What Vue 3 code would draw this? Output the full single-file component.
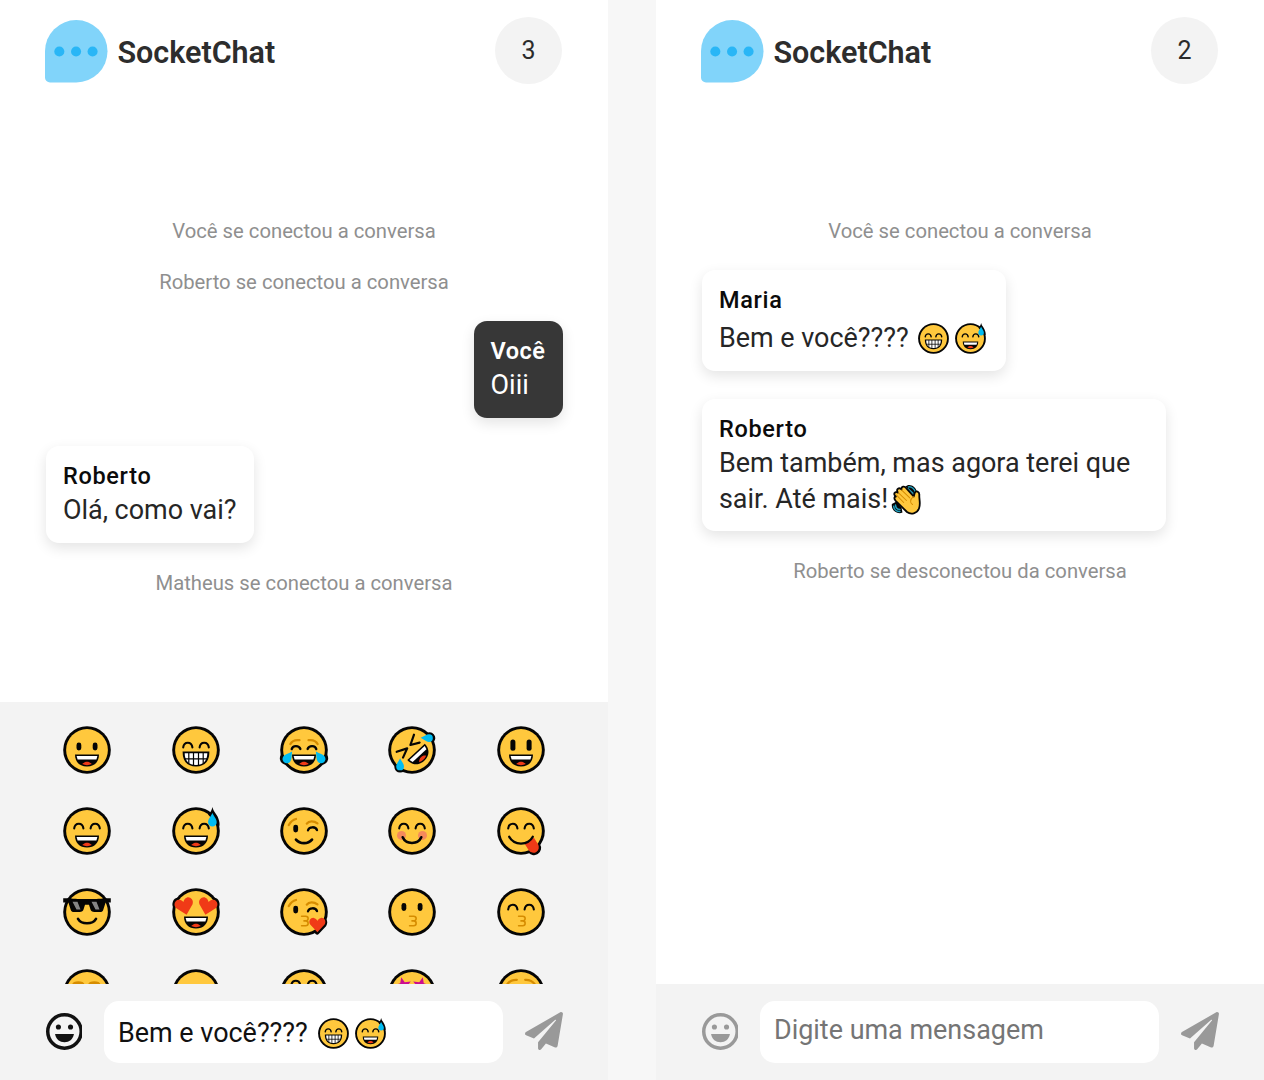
<script setup>
import { h } from 'vue'

const ink = '#050505'
const dot = (x, y, w = 4.8, t = 7.8) =>
  `<rect x="${x - w / 2}" y="${y - t / 2}" width="${w}" height="${t}" rx="${w / 2}" fill="${ink}"/>`
const line = (d, color = ink, w = 2.1) =>
  `<path d="${d}" fill="none" stroke="${color}" stroke-width="${w}" stroke-linecap="round" stroke-linejoin="round"/>`
const fill = (d, color) => `<path d="${d}" fill="${color}"/>`
const put = (x, y, r, body, s = 1) => `<g transform="translate(${x} ${y}) rotate(${r}) scale(${s})">${body}</g>`
const halo = (d) => `<path d="${d}" fill="${ink}" stroke="${ink}" stroke-width="5" stroke-linejoin="round"/>`

const rim = `<circle r="23.8" fill="${ink}"/>`
const skin = '<circle r="20.9" fill="#ffc83d"/>'
const base = rim + skin
const happyEyes = line('M-12.8-2.6C-12-8.8-4.4-8.8-3.6-2.6M3.6-2.6C4.4-8.8 12-8.8 12.8-2.6')
const grin =
  fill('M-12 4.5H12C12 12 7.4 16.5 0 16.5S-12 12-12 4.5Z', ink) +
  fill('M-10.4 6H10.4L9.4 9.6H-9.4Z', '#fff') +
  fill('M-4.8 14.1C-3 12.1-1.5 11.7 0 11.7S3 12.1 4.8 14.1C2 15.5-2 15.5-4.8 14.1Z', '#f03a17')
const kiss = line('M-2.4 4.3H1.6C5 4.3 5 8.9 1.6 8.9H0H1.6C5 8.9 5 13.8 1.6 13.8H-2.4', '#d68c00', 1.6)
const brow = '#d68c00'
const blue = '#00bcf2'
const red = '#f03a17'
const drop = 'M0-6.8C2-2.6 4.3-.6 4.3 2.4A4.3 4.3 0 0 1-4.3 2.4C-4.3-.6-2-2.6 0-6.8Z'
const heart = 'M0 7.8L-7.2 .2C-9.5-3.4-6.5-7-3.6-6.5C-1.6-6.2-.5-4.8 0-3.5C.5-4.8 1.6-6.2 3.6-6.5C6.5-7 9.5-3.4 7.2 .2Z'
const star = 'M0-8L2.2-2.5 8-2 3.6 1.6 5 7 0 4-5 7-3.6 1.6-8-2-2.2-2.5Z'
const tongue = 'M-5-5H5V2A5 5 0 0 1-5 2Z'
const winkEyes =
  dot(-8.3, -2.4) +
  line('M4-.7C5-4.7 11.8-4.7 13-.9', ink, 2.3) +
  line('M-15.2-6C-13.5-9-11.5-11.2-8-12M2.8-7.4C5-10.5 10-10.4 13.4-7.6', brow, 2.3)

const art = {
  grinning: base + dot(-8.1, -3.5) + dot(8.1, -3.5) + grin,
  beaming:
    base + happyEyes +
    fill('M-13.4 1.6H13.4C13.5 11.5 8.5 16.5 0 16.5S-13.5 11.5-13.4 1.6Z', ink) +
    fill('M-11.3 3.2H11.3C11.1 10.6 7.6 14.9 0 14.9S-11.1 10.6-11.3 3.2Z', '#fff') +
    line('M-11 8.9H11M-7.2 3V13M-2.5 3V15M2.5 3V15M7.2 3V13', ink, 1.2),
  joy:
    rim + put(-16.4, 6.4, 35, halo(drop), 0.95) + put(16.4, 6.4, -35, halo(drop), 0.95) + skin +
    line('M-13.6-6C-12-9-8-10.3-4.5-9.8M13.6-6C12-9 8-10.3 4.5-9.8', brow, 2.3) +
    line('M-12.3-.9C-11.3-4.8-5-4.8-3.6-1M3.6-1C5-4.8 11.3-4.8 12.3-.9', ink, 2.3) + grin +
    put(-15.8, 7, 35, fill(drop, blue)) + put(15.8, 7, -35, fill(drop, blue)),
  rofl:
    rim + put(15.5, -12, -88, halo(drop), 0.85) + put(-11.9, 14.8, 0, halo(drop), 0.85) + skin +
    line('M-15.3 1.8L-4.8-1.6-9 7.6M2-15.3L-1.6-5 7.6-7.4', ink, 2.2) +
    put(1, -1.4, -43, grin) +
    put(14.8, -12, -88, fill(drop, blue), 0.9) + put(-11.9, 14.3, 0, fill(drop, blue), 0.9),
  smiley: base + dot(-8.1, -4.8, 5, 11.2) + dot(8.1, -4.8, 5, 11.2) + grin,
  smile: base + happyEyes + grin,
  sweat:
    base + happyEyes + grin +
    fill('M16.4-24C17.4-19 21.8-16.5 23-10.5C23.4-9 23.8-7 23.4-5L20-8 12-16.5C14.5-18.5 15.8-21 16.4-24Z', ink) +
    put(16.4, -11.2, 0, fill(drop, blue)),
  wink: base + winkEyes + line('M-8 8.6C-4 13.4 4 13.4 8 8.6', ink, 2.7),
  blush:
    base + happyEyes +
    '<circle cx="-10.5" cy="4.4" r="4.5" fill="#f5895b"/><circle cx="10.5" cy="4.4" r="4.5" fill="#f5895b"/>' +
    line('M-9.3 6.3C-6 13.8 6 13.8 9.3 6.3', ink, 2.6),
  yum:
    rim + put(12, 15.4, -32, halo(tongue), 0.95) + skin +
    put(11.2, 14.4, -32, fill(tongue, red), 1.1) +
    fill('M-9 4H13L11.5 7.5C8 12 3 12.6 0 12.6Z', '#ffc83d') + happyEyes +
    line('M-11.8 5.8C-7 14.8 7 14.8 11.8 5.8', ink, 2.3),
  sunglasses:
    base +
    fill('M-23.8-13.7H-17C-11-12.8-8-13-3-13H3C8-13 11-12.8 17-13.7H23.8V-9.6H18.6L16.2-2C15.7-.4 14.7 0 13.2 0H7.5C5 0 4-.9 3.4-2.7L2-7.3H-2L-3.4-2.7C-4-.9-5 0-7.5 0H-13.2C-14.7 0-15.7-.4-16.2-2L-18.6-9.6H-23.8Z', ink) +
    fill('M-14.5-10.3H-9.5L-6.5-2.6H-10.5ZM4.5-10.3H9.5L12.5-2.6H8.5Z', '#858585') +
    line('M-9 6.8C-5.5 12.8 5.5 12.8 9 6.8', ink, 2.6),
  hearts:
    rim + put(-12.6, -6.5, -14, halo(heart)) + put(12.6, -6.5, 14, halo(heart)) + skin +
    put(-11.6, -6, -14, fill(heart, red), 1.16) + put(11.6, -6, 14, fill(heart, red), 1.16) + grin,
  kissHeart:
    rim + put(13.2, 12.8, 0, halo(heart), 0.95) + skin +
    winkEyes + kiss + put(13.4, 12.4, 0, fill(heart, red)),
  kissing: base + dot(-8.1, -5) + dot(8.1, -5) + kiss,
  kissSmile: base + happyEyes + kiss,
  relaxed: base + '<ellipse cx="-8.7" cy="-8.8" rx="6" ry="3" fill="#d68c00"/><ellipse cx="7.3" cy="-8.8" rx="6" ry="3" fill="#d68c00"/>',
  slight: base,
  hugging: base + line('M-12.8-7.5C-12-13.8-4.4-13.8-3.6-7.5M3.6-7.5C4.4-13.8 12-13.8 12.8-7.5'),
  stars: base + put(-9, -7.6, -12, fill(star, '#cc0d8f'), 1.05) + put(9, -7.6, 12, fill(star, '#cc0d8f'), 1.05),
  thinking: base + line('M-13.5-9C-11.5-12-8-13.4-4.2-13.2M4.2-13.2C8-13.4 11.5-12 13.5-9', brow, 2.3),
  wave:
    '<g transform="scale(1.55)">' +
    fill('M-1-13C2-16.5 9.5-14 10.5-7L8-4ZM-14.6 4.5C-15.5 11-9 15.5-4 13L-5 8-10 2Z', ink) +
    line('M2-12.6C5.3-13 8.3-10.4 8.7-7.2M1.6-10.6L6.5-6.2M-12.8 6.8C-12.4 10.4-9.5 12.2-6.6 12M-11 5.6C-10.8 8-9 9.9-6.6 10', '#1f9dbb', 1.5) +
    `<path d="M-12-4.5C-13-7-10-8.3-8.5-6.8C-11-10.5-7.2-12.6-5-10C-5.5-13.2-2-13.7-.3-11.4L7.2-3L8.2-6.5C9.5-9.3 13-8 12.8-4.5C12.5 0 14.4 4 12.5 9C10.5 14 4.5 15.5 .5 12.5L-10.8 1.3C-12.8-.8-12.4-3-10.6-3Z" fill="#ffc83d" stroke="${ink}" stroke-width="1.8" stroke-linejoin="round"/>` +
    line('M-10-4.4L-2.8 3M-8-6.6L0 1M-4.8-9.4L3.3-1.6M7-2.8C3.2 0 3.4 3.6 6 5', '#d68c00', 1) + '</g>',
}

const Emoji = (props) =>
  h('svg', { viewBox: '-24 -24 48 48', overflow: 'visible', innerHTML: art[props.name] })
Emoji.props = ['name']

const picker = [
  'grinning', 'beaming', 'joy', 'rofl', 'smiley',
  'smile', 'sweat', 'wink', 'blush', 'yum',
  'sunglasses', 'hearts', 'kissHeart', 'kissing', 'kissSmile',
  'relaxed', 'slight', 'hugging', 'stars', 'thinking',
]

const chats = [
  {
    online: 3,
    open: true,
    draft: { text: 'Bem e você???? ', emojis: ['beaming', 'sweat'] },
    items: [
      { notice: 'Você se conectou a conversa' },
      { notice: 'Roberto se conectou a conversa' },
      { author: 'Você', text: 'Oiii', own: true },
      { author: 'Roberto', text: 'Olá, como vai?' },
      { notice: 'Matheus se conectou a conversa' },
    ],
  },
  {
    online: 2,
    open: false,
    items: [
      { notice: 'Você se conectou a conversa' },
      { author: 'Maria', text: 'Bem e você???? ', emojis: ['beaming', 'sweat'] },
      { author: 'Roberto', text: 'Bem também, mas agora terei que sair. Até mais!', emojis: ['wave'], tight: true },
      { notice: 'Roberto se desconectou da conversa' },
    ],
  },
]
</script>

<template>
  <main class="screens">
    <section v-for="(chat, i) in chats" :key="i" class="chat">
      <header class="header">
        <svg class="logo" viewBox="0 0 62 62">
          <path d="M31 0A31 31 0 0 1 31 62H5A5 5 0 0 1 0 57V31A31 31 0 0 1 31 0Z" fill="#81d4fa" />
          <g fill="#29b6f6">
            <circle cx="14.2" cy="31.3" r="5" />
            <circle cx="30.8" cy="31.3" r="5" />
            <circle cx="47.2" cy="31.3" r="5" />
          </g>
        </svg>
        <h1 class="title">SocketChat</h1>
        <span class="online">{{ chat.online }}</span>
      </header>

      <div class="messages">
        <template v-for="(item, k) in chat.items" :key="k">
          <p v-if="item.notice" class="notice">{{ item.notice }}</p>
          <article v-else class="bubble" :class="{ own: item.own }">
            <strong class="author">{{ item.author }}</strong>
            <p class="text" :class="{ tall: item.emojis && !item.tight }">{{ item.text }}<Emoji v-for="e in item.emojis" :key="e" :name="e" class="inline-emoji" /></p>
          </article>
        </template>
      </div>

      <div v-if="chat.open" class="picker">
        <span v-for="name in picker" :key="name" class="cell"><Emoji :name="name" class="emoji" /></span>
      </div>

      <footer class="composer" :class="{ active: chat.open }">
        <svg class="smile" viewBox="-18 -18 36 36">
          <circle r="16.3" fill="none" stroke="currentColor" stroke-width="3.4" />
          <circle cx="-5.9" cy="-4.4" r="2.5" fill="currentColor" />
          <circle cx="5.9" cy="-4.4" r="2.5" fill="currentColor" />
          <path d="M-9.2 2.4H9.2C8.2 7.7 4.6 10.4 0 10.4S-8.2 7.7-9.2 2.4Z" fill="currentColor" />
        </svg>
        <div class="field">
          <p v-if="chat.draft" class="draft">{{ chat.draft.text }}<Emoji v-for="e in chat.draft.emojis" :key="e" :name="e" class="inline-emoji" /></p>
          <p v-else class="placeholder">Digite uma mensagem</p>
        </div>
        <svg class="send" viewBox="0 0 512 512">
          <path fill="currentColor" d="M476 3.2L12.5 270.6c-18.1 10.4-15.8 35.6 2.2 43.2L121 358.4l287.3-253.2c5.5-4.9 13.3 2.6 8.6 8.3L176 407v80.5c0 23.6 28.5 32.9 42.5 15.8L282 426l124.6 52.2c14.2 6 30.4-2.9 33-18.2l72-432C515 7.8 493.3-6.8 476 3.2z" />
        </svg>
      </footer>
    </section>
  </main>
</template>

<style>
body {
  margin: 0;
  background: #f7f7f7;
}
</style>

<style scoped>
.screens {
  display: flex;
  gap: 48px;
  width: 1264px;
  height: 1080px;
  overflow: hidden;
  font-family: Roboto, "Liberation Sans", sans-serif;
}
.chat {
  display: flex;
  flex-direction: column;
  width: 608px;
  height: 1080px;
  background: #fff;
}
p {
  margin: 0;
}
.header {
  display: flex;
  align-items: center;
  flex: none;
  height: 103px;
  padding: 0 46px 0 45.4px;
  box-sizing: border-box;
}
.logo {
  width: 62.5px;
  height: 62.5px;
}
.title {
  margin: 1px 0 0 9.5px;
  font-size: 30.5px;
  font-weight: 600;
  color: #2d2d2d;
}
.online {
  display: flex;
  align-items: center;
  justify-content: center;
  width: 67px;
  height: 67px;
  margin-left: auto;
  margin-top: -2px;
  border-radius: 50%;
  background: #f3f3f3;
  font-size: 25px;
  color: #2b2b2b;
}
.messages {
  display: flex;
  flex-direction: column;
  align-items: flex-start;
  gap: 28px;
  flex: 1;
  min-height: 0;
  padding: 116.2px 45.5px 0;
}
.notice {
  align-self: center;
  padding-top: 1px;
  font-size: 20.25px;
  line-height: 22px;
  color: #8f8f8f;
}
.bubble {
  box-sizing: border-box;
  max-width: 464.5px;
  padding: 14.5px 17px 14.3px 17.4px;
  border-radius: 13px;
  background: #fff;
  box-shadow: 0 5px 14px rgba(0, 0, 0, 0.11);
}
.bubble.own {
  align-self: flex-end;
  padding-left: 16.8px;
  background: #373737;
}
.author {
  display: block;
  font-size: 23.5px;
  font-weight: 500;
  line-height: 31px;
  letter-spacing: 0.7px;
  color: #0b0b0b;
}
.own .author {
  font-weight: 600;
  letter-spacing: 0.5px;
}
.text {
  padding-top: 1.7px;
  font-size: 26.95px;
  line-height: 35.4px;
  color: #262626;
}
.text.tall {
  padding-top: 4.4px;
  line-height: 36.8px;
}
.own .author,
.own .text {
  color: #fff;
}
.inline-emoji {
  display: inline-block;
  width: 31px;
  height: 31px;
  margin: -6px 3px;
  vertical-align: -6px;
  position: relative;
  top: -5px;
}
.picker {
  display: grid;
  grid-template-columns: repeat(5, 1fr);
  grid-auto-rows: 81px;
  flex: none;
  height: 282px;
  padding: 7px 33px 0;
  box-sizing: border-box;
  overflow: hidden;
  background: #f3f3f3;
}
.cell {
  display: flex;
  align-items: center;
  justify-content: center;
}
.emoji {
  width: 48px;
  height: 48px;
}
.composer {
  display: flex;
  align-items: center;
  flex: none;
  height: 96px;
  padding: 0 45px 2px 45.5px;
  box-sizing: border-box;
  background: #f3f3f3;
}
.smile {
  width: 37px;
  height: 37px;
  color: #999;
}
.active .smile {
  color: #111;
}
.field {
  display: flex;
  align-items: center;
  width: 399px;
  height: 62px;
  margin: 2px 22px 0;
  padding: 0 13.5px;
  box-sizing: border-box;
  border-radius: 15px;
  background: #fff;
  font-size: 26.95px;
}
.draft {
  padding-top: 2px;
  color: #111;
}
.placeholder {
  margin-top: -4px;
  color: #757575;
}
.send {
  width: 38px;
  height: 38px;
  color: #999;
}
</style>
